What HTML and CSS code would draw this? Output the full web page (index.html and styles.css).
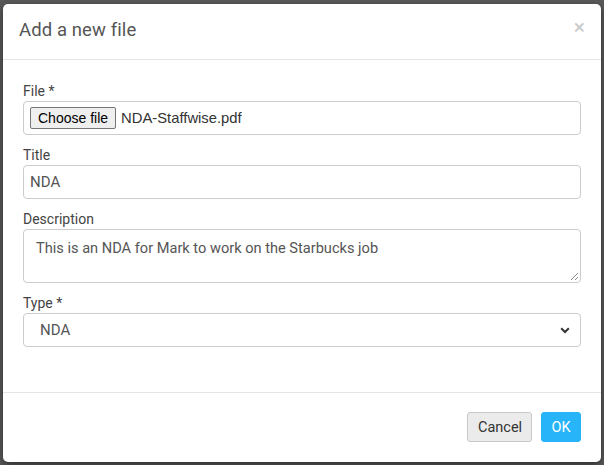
FILE: index.html
```html
<!DOCTYPE html>
<html>
<head>
<meta charset="utf-8">
<link rel="stylesheet" href="styles.css">
</head>
<body>
<div class="backdrop">
  <div class="modal">
    <div class="modal-header">
      <h4 class="modal-title">Add a new file</h4>
      <span class="close">&times;</span>
    </div>
    <div class="modal-body">
      <div class="form-group">
        <label class="label">File *</label>
        <div class="control file-control">
          <span class="file-btn">Choose file</span>
          <span class="file-name">NDA-Staffwise.pdf</span>
        </div>
      </div>
      <div class="form-group">
        <label class="label">Title</label>
        <div class="control text-control">NDA</div>
      </div>
      <div class="form-group">
        <label class="label">Description</label>
        <div class="control textarea-control">This is an NDA for Mark to work on the Starbucks job
          <svg class="grip" width="9" height="9" viewBox="0 0 9 9"><path d="M8 1 L1 8 M8 5 L5 8" stroke="#888" stroke-width="1"/></svg>
        </div>
      </div>
      <div class="form-group">
        <label class="label">Type *</label>
        <div class="control select-control">
          <span>NDA</span>
          <svg class="chevron" width="10" height="7" viewBox="0 0 10 7"><path d="M1.2 1.3 L5 5 L8.8 1.3" fill="none" stroke="#333" stroke-width="2"/></svg>
        </div>
      </div>
    </div>
    <div class="modal-footer">
      <button class="btn btn-default">Cancel</button>
      <button class="btn btn-primary">OK</button>
    </div>
  </div>
</div>
</body>
</html>
```
FILE: styles.css
```css
html, body {
  margin: 0;
  padding: 0;
  background: #5a5a5a;
}
body {
  width: 604px;
  height: 465px;
  overflow: hidden;
  font-family: Roboto, "Liberation Sans", sans-serif;
}
.backdrop {
  padding: 4px 3px 0 3px;
}
.modal {
  background: #fff;
  border-radius: 5px;
  height: 458px;
  display: flex;
  flex-direction: column;
  box-shadow: 0 3px 9px rgba(0,0,0,0.5);
}
.modal-header {
  height: 56px;
  box-sizing: border-box;
  border-bottom: 1px solid #e5e5e5;
  display: flex;
  align-items: center;
  justify-content: space-between;
  padding: 0 16px 4px 16px;
}
.modal-title {
  margin: 0;
  font-size: 18.5px;
  font-weight: 400;
  color: #555;
  letter-spacing: 0.1px;
}
.close {
  color: #c8c8c8;
  font-size: 21px;
  font-weight: 400;
  line-height: 1;
  margin-top: -4px;
}
.modal-body {
  padding: 21px 20px 0 20px;
  height: 333px;
  box-sizing: border-box;
  border-bottom: 1px solid #e5e5e5;
}
.form-group {
  margin-bottom: 10px;
}
.label {
  display: block;
  font-size: 14px;
  line-height: 20px;
  color: #444;
}
.control {
  box-sizing: border-box;
  border: 1px solid #ccc;
  border-radius: 4px;
  height: 34px;
  display: flex;
  align-items: center;
  font-size: 15px;
  color: #555;
}
.file-control {
  padding: 0 6px;
}
.file-btn {
  font-family: "Liberation Sans", Arial, sans-serif;
  font-size: 14px;
  color: #000;
  background: #efefef;
  border: 1px solid #767676;
  border-radius: 2px;
  padding: 0 7px;
  height: 22px;
  box-sizing: border-box;
  display: flex;
  align-items: center;
  margin-right: 5px;
}
.file-name {
  font-family: "Liberation Sans", Arial, sans-serif;
  font-size: 14.8px;
  color: #333;
}
.text-control {
  padding: 0 6px;
}
.textarea-control {
  height: 54px;
  align-items: flex-start;
  padding: 9px 12px 7px 12px;
  position: relative;
  font-size: 14.6px;
}
.grip {
  position: absolute;
  right: 1px;
  bottom: 1px;
}
.select-control {
  padding: 0 10px 0 16px;
  justify-content: space-between;
}
.modal-footer {
  flex: 1;
  display: flex;
  justify-content: flex-end;
  align-items: flex-start;
  padding: 19px 20px 0 0;
  gap: 9px;
}
.btn {
  font-family: Roboto, "Liberation Sans", sans-serif;
  font-size: 14.5px;
  height: 30px;
  border-radius: 3px;
  padding: 0 10px;
  box-sizing: border-box;
  cursor: pointer;
}
.btn-default {
  background: #ebebeb;
  border: 1px solid #c8c8c8;
  color: #333;
  width: 65px;
}
.btn-primary {
  background: #27b4f8;
  border: 1px solid #27b4f8;
  color: #fff;
  width: 40px;
  padding: 0;
}
```
